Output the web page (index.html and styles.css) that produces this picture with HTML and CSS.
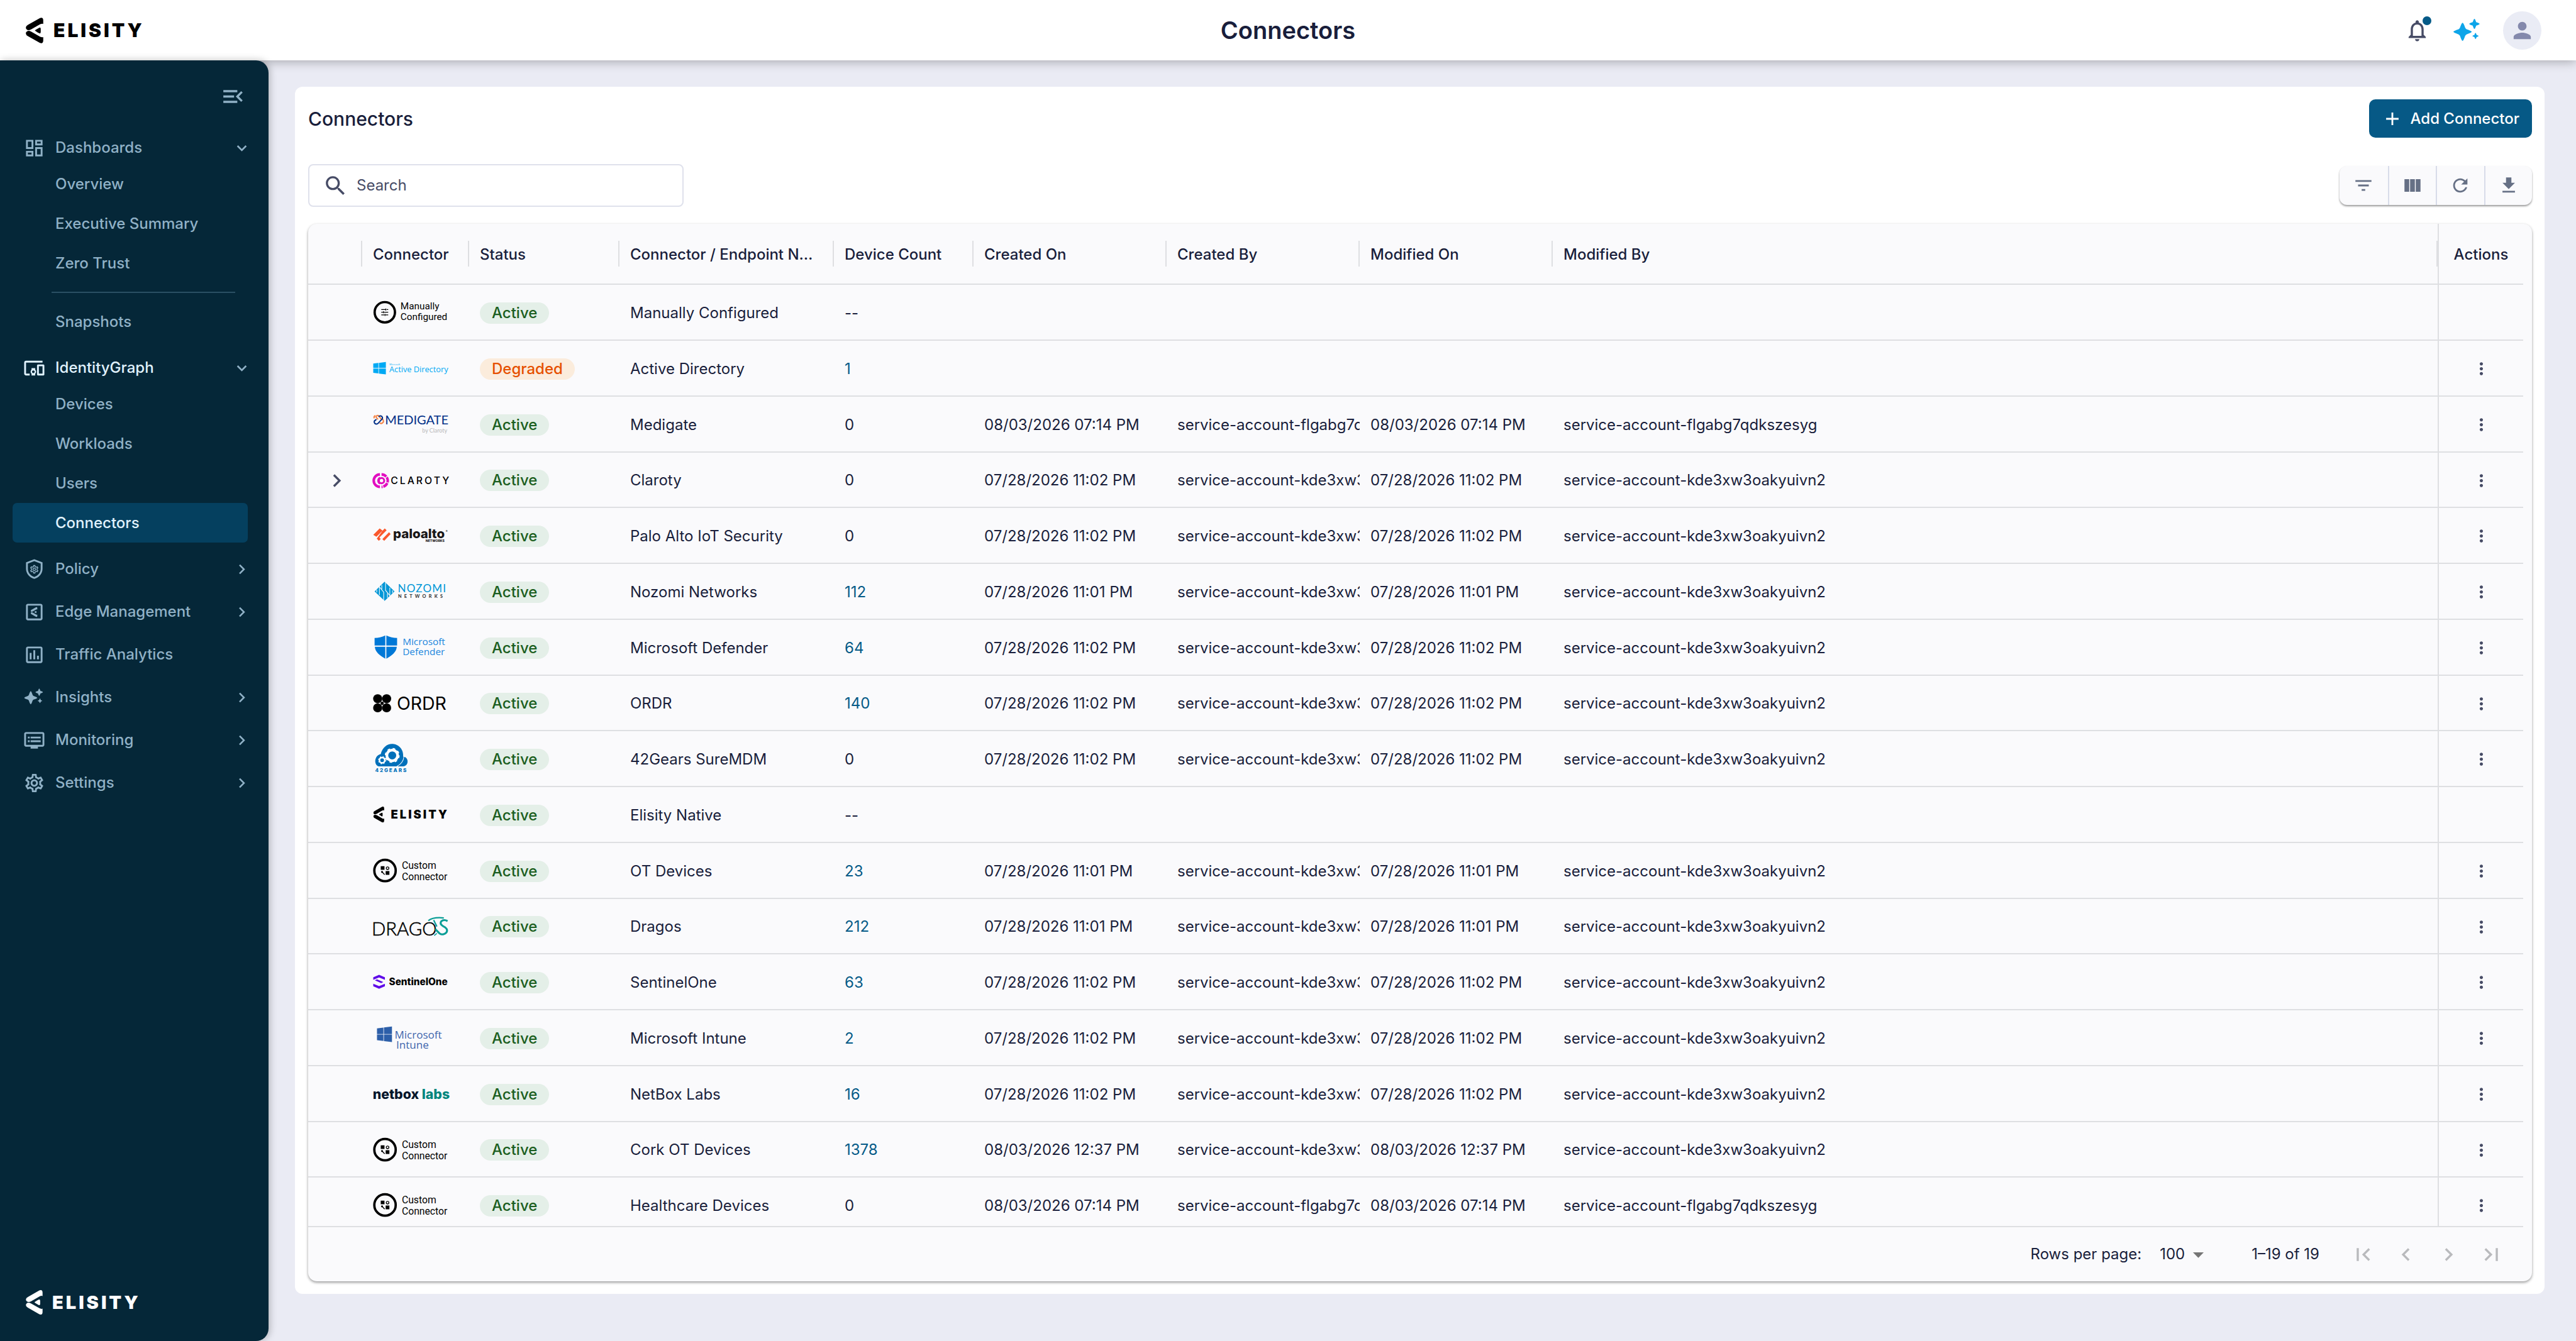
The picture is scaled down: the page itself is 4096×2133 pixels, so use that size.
FILE: index.html
```
<!DOCTYPE html>
<html lang="en">
  <head>
    <meta charset="UTF-8" />
    <meta name="viewport" content="width=device-width, initial-scale=1.0" />
    <title>Connectors</title>
    <link rel="stylesheet" href="styles.css" />
    <script src="script.js" defer></script>
  </head>
  <body>
    <!-- shared icon shapes -->
    <svg class="sprite" aria-hidden="true">
      <symbol id="mark" viewBox="0 0 33 48">
        <path d="M26.5.6Q32.7-1.4 32.7 5V11.6Q30.5 10.6 27 12.2L10 22Q3 25.4.5 20.4-1 16 4 13.4Z" />
        <path d="M26.5 47.4Q32.7 49.4 32.7 43V36.4Q30.5 37.4 27 35.8L10 26Q3 22.6.5 27.6-1 32 4 34.6Z" />
        <path d="M17 24Q17.4 23 25.6 18.6 28 18 28 21V27Q28 30 25.6 29.4 17.4 25 17 24Z" />
      </symbol>
      <symbol id="i-sparkle" viewBox="0 0 25 21">
        <path d="M8.5 3.6Q9.4 3.6 10.9 8.2 11.4 9.2 12.2 9.6 17 11.2 17 12 17 12.8 12.2 14.4 11.4 14.8 10.9 15.8 9.4 20.4 8.5 20.4 7.6 20.4 6.1 15.8 5.6 14.8 4.8 14.4 0 12.8 0 12 0 11.2 4.8 9.6 5.6 9.2 6.1 8.2 7.6 3.6 8.5 3.6Z" />
        <path d="M19.5 0Q20.1 0 21.1 3.1 24.3 4.1 24.3 4.7 24.3 5.3 21.1 6.3 20.1 9.4 19.5 9.4 18.9 9.4 17.9 6.3 14.7 5.3 14.7 4.7 14.7 4.1 17.9 3.1 18.9 0 19.5 0Z" />
        <path d="M20.5 13Q20.9 13 21.5 14.9 23.4 15.5 23.4 15.9 23.4 16.3 21.5 16.9 20.9 18.8 20.5 18.8 20.1 18.8 19.5 16.9 17.6 16.3 17.6 15.9 17.6 15.5 19.5 14.9 20.1 13 20.5 13Z" />
      </symbol>
      <symbol id="i-gear" viewBox="0 0 24 24">
        <path d="M19.43 12.98c.04-.32.07-.64.07-.98 0-.34-.03-.66-.07-.98l2.11-1.65c.19-.15.24-.42.12-.64l-2-3.46c-.09-.16-.26-.25-.44-.25-.06 0-.12.01-.17.03l-2.49 1c-.52-.4-1.08-.73-1.69-.98l-.38-2.65C14.46 2.18 14.25 2 14 2h-4c-.25 0-.46.18-.49.42l-.38 2.65c-.61.25-1.17.59-1.69.98l-2.49-1c-.06-.02-.12-.03-.18-.03-.17 0-.34.09-.43.25l-2 3.46c-.13.22-.07.49.12.64l2.11 1.65c-.04.32-.07.65-.07.98 0 .33.03.66.07.98l-2.11 1.65c-.19.15-.24.42-.12.64l2 3.46c.09.16.26.25.44.25.06 0 .12-.01.17-.03l2.49-1c.52.4 1.08.73 1.69.98l.38 2.65c.03.24.24.42.49.42h4c.25 0 .46-.18.49-.42l.38-2.65c.61-.25 1.17-.59 1.69-.98l2.49 1c.06.02.12.03.18.03.17 0 .34-.09.43-.25l2-3.46c.12-.22.07-.49-.12-.64l-2.11-1.65zm-1.98-1.71c.04.31.05.52.05.73 0 .21-.02.43-.05.73l-.14 1.13.89.7 1.08.84-.7 1.21-1.27-.51-1.04-.42-.9.68c-.43.32-.84.56-1.25.73l-1.06.43-.16 1.13-.2 1.35h-1.4l-.19-1.35-.16-1.13-1.06-.43c-.43-.18-.83-.41-1.23-.71l-.91-.7-1.06.43-1.27.51-.7-1.21 1.08-.84.89-.7-.14-1.13c-.03-.31-.05-.54-.05-.74s.02-.43.05-.73l.14-1.13-.89-.7-1.08-.84.7-1.21 1.27.51 1.04.42.9-.68c.43-.32.84-.56 1.25-.73l1.06-.43.16-1.13.2-1.35h1.39l.19 1.35.16 1.13 1.06.43c.43.18.83.41 1.23.71l.91.7 1.06-.43 1.27-.51.7 1.21-1.07.85-.89.7.14 1.13zM12 8c-2.21 0-4 1.79-4 4s1.79 4 4 4 4-1.79 4-4-1.79-4-4-4zm0 6c-1.1 0-2-.9-2-2s.9-2 2-2 2 .9 2 2-.9 2-2 2z" />
      </symbol>
      <symbol id="i-down" viewBox="0 0 24 24"><path d="M16.59 8.59 12 13.17 7.41 8.59 6 10l6 6 6-6z" /></symbol>
      <symbol id="i-right" viewBox="0 0 24 24"><path d="M8.59 16.59 13.17 12 8.59 7.41 10 6l6 6-6 6z" /></symbol>
      <symbol id="i-more" viewBox="0 0 24 24">
        <path d="M12 8c1.1 0 2-.9 2-2s-.9-2-2-2-2 .9-2 2 .9 2 2 2zm0 2c-1.1 0-2 .9-2 2s.9 2 2 2 2-.9 2-2-.9-2-2-2zm0 6c-1.1 0-2 .9-2 2s.9 2 2 2 2-.9 2-2-.9-2-2-2z" />
      </symbol>
    </svg>

    <!-- top bar -->
    <header class="topbar">
      <a class="brand" href="#">
        <svg class="brand-mark"><use href="#mark" /></svg>
        <span>ELISITY</span>
      </a>
      <h1>Connectors</h1>
      <div class="topbar-actions">
        <button class="bare-btn bell" aria-label="Notifications">
          <svg viewBox="0 0 24 24"><path d="M12 22c1.1 0 2-.9 2-2h-4c0 1.1.9 2 2 2zm6-6v-5c0-3.07-1.63-5.64-4.5-6.32V4c0-.83-.67-1.5-1.5-1.5s-1.5.67-1.5 1.5v.68C7.64 5.36 6 7.92 6 11v5l-2 2v1h16v-1l-2-2zm-2 1H8v-6c0-2.48 1.51-4.5 4-4.5s4 2.02 4 4.5v6z" /></svg>
          <i class="dot"></i>
        </button>
        <button class="bare-btn spark" aria-label="Assistant"><svg><use href="#i-sparkle" /></svg></button>
        <button class="bare-btn avatar" aria-label="Account">
          <svg viewBox="0 0 24 24"><path d="M12 12c2.21 0 4-1.79 4-4s-1.79-4-4-4-4 1.79-4 4 1.79 4 4 4zm0 2c-2.67 0-8 1.34-8 4v2h16v-2c0-2.66-5.33-4-8-4z" /></svg>
        </button>
      </div>
    </header>

    <div class="layout">
      <!-- side navigation -->
      <nav class="sidebar">
        <button class="bare-btn collapse" aria-label="Collapse menu">
          <svg viewBox="0 0 24 24"><path d="M3 18h13v-2H3v2zM3 6v2h13V6H3zm0 7h10v-2H3v2zm18 2.59L17.42 12 21 8.41 19.59 7l-5 5 5 5L21 15.59z" /></svg>
        </button>

        <div class="nav-group">
          <a class="nav-item" href="#">
            <svg class="nav-icon" viewBox="0 0 24 24"><path d="M19 5v2h-4V5h4M9 5v6H5V5h4m10 8v6h-4v-6h4M9 17v2H5v-2h4M21 3h-8v6h8V3zM11 3H3v10h8V3zm10 8h-8v10h8V11zm-10 4H3v6h8v-6z" /></svg>
            <span>Dashboards</span>
            <svg class="chev"><use href="#i-down" /></svg>
          </a>
          <a class="sub-item" href="#">Overview</a>
          <a class="sub-item" href="#">Executive Summary</a>
          <a class="sub-item" href="#">Zero Trust</a>
          <hr />
          <a class="sub-item" href="#">Snapshots</a>
        </div>

        <div class="nav-group">
          <a class="nav-item open" href="#">
            <svg class="nav-icon" viewBox="0 0 24 24"><path d="M3 6h18V4H3c-1.1 0-2 .9-2 2v12c0 1.1.9 2 2 2h4v-2H3V6zm10 6H9v1.78c-.61.55-1 1.33-1 2.22 0 .89.39 1.67 1 2.22V20h4v-1.78c.61-.55 1-1.34 1-2.22s-.39-1.67-1-2.22V12zm-2 5.5c-.83 0-1.5-.67-1.5-1.5s.67-1.5 1.5-1.5 1.5.67 1.5 1.5-.67 1.5-1.5 1.5zM22 8h-6c-.5 0-1 .5-1 1v10c0 .5.5 1 1 1h6c.5 0 1-.5 1-1V9c0-.5-.5-1-1-1zm-1 10h-4v-8h4v8z" /></svg>
            <span>IdentityGraph</span>
            <svg class="chev"><use href="#i-down" /></svg>
          </a>
          <a class="sub-item" href="#">Devices</a>
          <a class="sub-item" href="#">Workloads</a>
          <a class="sub-item" href="#">Users</a>
          <a class="sub-item selected" href="#">Connectors</a>
        </div>

        <div class="nav-group">
          <a class="nav-item" href="#">
            <svg class="nav-icon" viewBox="0 0 24 24">
              <path d="M12 1 3 4.5v7c0 5 3.700 9.500 9 11 5.300-1.500 9-6 9-11v-7zm0 2.100 7 2.700v5.700c0 4-2.900 7.500-7 8.900-4.100-1.400-7-4.900-7-8.900V5.800z" />
              <use href="#i-gear" x="6.5" y="6.5" width="11" height="11" />
            </svg>
            <span>Policy</span>
            <svg class="chev"><use href="#i-right" /></svg>
          </a>
        </div>
        <div class="nav-group">
          <a class="nav-item" href="#">
            <svg class="nav-icon" viewBox="0 0 24 24">
              <path d="M19 3H5c-1.1 0-2 .9-2 2v14c0 1.1.9 2 2 2h14c1.1 0 2-.9 2-2V5c0-1.1-.9-2-2-2zm0 16H5V5h14v14z" />
              <use href="#mark" x="8" y="6.5" width="7.5" height="11" />
            </svg>
            <span>Edge Management</span>
            <svg class="chev"><use href="#i-right" /></svg>
          </a>
        </div>
        <div class="nav-group">
          <a class="nav-item" href="#">
            <svg class="nav-icon" viewBox="0 0 24 24"><path d="M19 3H5c-1.1 0-2 .9-2 2v14c0 1.1.9 2 2 2h14c1.1 0 2-.9 2-2V5c0-1.1-.9-2-2-2zm0 16H5V5h14v14zM7 10h2v7H7zm4-3h2v10h-2zm4 6h2v4h-2z" /></svg>
            <span>Traffic Analytics</span>
          </a>
        </div>
        <div class="nav-group">
          <a class="nav-item" href="#">
            <svg class="nav-icon" viewBox="0 0 24 24"><use href="#i-sparkle" x="1" y="2" width="21" height="18" /></svg>
            <span>Insights</span>
            <svg class="chev"><use href="#i-right" /></svg>
          </a>
        </div>
        <div class="nav-group">
          <a class="nav-item" href="#">
            <svg class="nav-icon" viewBox="0 0 24 24"><path d="M21 3H3c-1.1 0-2 .9-2 2v12c0 1.1.9 2 2 2h5v2h8v-2h5c1.1 0 1.99-.9 1.99-2L23 5c0-1.1-.9-2-2-2zm0 14H3V5h18v12zm-2-9H8v2h11V8zm0 4H8v2h11v-2zM7 8H5v2h2V8zm0 4H5v2h2v-2z" /></svg>
            <span>Monitoring</span>
            <svg class="chev"><use href="#i-right" /></svg>
          </a>
        </div>
        <div class="nav-group">
          <a class="nav-item" href="#">
            <svg class="nav-icon"><use href="#i-gear" /></svg>
            <span>Settings</span>
            <svg class="chev"><use href="#i-right" /></svg>
          </a>
        </div>

        <a class="brand brand-small" href="#">
          <svg class="brand-mark"><use href="#mark" /></svg>
          <span>ELISITY</span>
        </a>
      </nav>

      <!-- main card -->
      <main class="card">
        <div class="card-head">
          <h2>Connectors</h2>
          <button class="add-btn">
            <svg viewBox="0 0 24 24"><path d="M19 13h-6v6h-2v-6H5v-2h6V5h2v6h6v2z" /></svg>
            Add Connector
          </button>
        </div>

        <div class="toolbar">
          <label class="search">
            <svg viewBox="0 0 24 24"><path d="M15.5 14h-.79l-.28-.27C15.41 12.59 16 11.11 16 9.5 16 5.91 13.09 3 9.5 3S3 5.91 3 9.5 5.91 16 9.5 16c1.61 0 3.09-.59 4.23-1.57l.27.28v.79l5 4.99L20.49 19l-4.99-5zm-6 0C7.01 14 5 11.99 5 9.5S7.01 5 9.5 5 14 7.01 14 9.5 11.99 14 9.5 14z" /></svg>
            <input type="text" placeholder="Search" aria-label="Search" />
          </label>
          <div class="tools">
            <button aria-label="Filter"><svg viewBox="0 0 24 24"><path d="M10 18h4v-2h-4v2zM3 6v2h18V6H3zm3 7h12v-2H6v2z" /></svg></button>
            <button aria-label="Columns"><svg viewBox="0 0 24 24"><path d="M14.67 5v14H9.33V5h5.34zm1 14H21V5h-5.33v14zm-7.34 0V5H3v14h5.33z" /></svg></button>
            <button aria-label="Refresh"><svg viewBox="0 0 24 24"><path d="M17.65 6.35C16.2 4.9 14.21 4 12 4c-4.42 0-7.99 3.58-7.99 8s3.57 8 7.99 8c3.73 0 6.84-2.55 7.73-6h-2.08c-.82 2.33-3.04 4-5.65 4-3.31 0-6-2.69-6-6s2.69-6 6-6c1.66 0 3.14.69 4.22 1.78L13 11h7V4l-2.35 2.35z" /></svg></button>
            <button aria-label="Download"><svg viewBox="0 0 24 24"><path d="M19 9h-4V3H9v6H5l7 7 7-7zM5 18v2h14v-2H5z" /></svg></button>
          </div>
        </div>

        <div class="grid">
          <div class="grid-scroll">
            <table>
              <colgroup>
                <col class="c-toggle" />
                <col class="c-logo" />
                <col class="c-status" />
                <col class="c-name" />
                <col class="c-count" />
                <col class="c-date" />
                <col class="c-date" />
                <col class="c-date" />
                <col />
                <col class="c-actions" />
              </colgroup>
              <thead>
                <tr>
                  <th></th>
                  <th>Connector</th>
                  <th>Status</th>
                  <th>Connector / Endpoint Name</th>
                  <th>Device Count</th>
                  <th>Created On</th>
                  <th>Created By</th>
                  <th>Modified On</th>
                  <th>Modified By</th>
                  <th class="actions">Actions</th>
                </tr>
              </thead>
              <tbody id="rows"></tbody>
            </table>
          </div>
          <footer class="pager">
            <label for="page_size">Rows per page:</label>
            <div class="page-size">
              <select id="page_size">
                <option>100</option>
                <option>50</option>
                <option>25</option>
              </select>
              <svg viewBox="0 0 24 24"><path d="M7 10l5 5 5-5z" /></svg>
            </div>
            <span class="range">1–19 of 19</span>
            <button class="bare-btn" aria-label="First page" disabled><svg viewBox="0 0 24 24"><path d="M18.41 16.59 13.82 12l4.59-4.59L17 6l-6 6 6 6zM6 6h2v12H6z" /></svg></button>
            <button class="bare-btn" aria-label="Previous page" disabled><svg viewBox="0 0 24 24"><path d="M15.41 16.59 10.83 12l4.58-4.59L14 6l-6 6 6 6z" /></svg></button>
            <button class="bare-btn" aria-label="Next page" disabled><svg viewBox="0 0 24 24"><path d="M8.59 16.59 13.17 12 8.59 7.41 10 6l6 6-6 6z" /></svg></button>
            <button class="bare-btn" aria-label="Last page" disabled><svg viewBox="0 0 24 24"><path d="M5.59 7.41 10.18 12l-4.59 4.59L7 18l6-6-6-6zM16 6h2v12h-2z" /></svg></button>
          </footer>
        </div>
      </main>
    </div>
  </body>
</html>
```
FILE: styles.css
```
* {
  box-sizing: border-box;
}

body {
  margin: 0;
  height: 100vh;
  display: flex;
  flex-direction: column;
  background-color: #eaebf4;
  color: #191e3b;
  font-family: Inter, "Liberation Sans", sans-serif;
  font-size: 24px;
  line-height: 34px;
}

a {
  color: inherit;
  text-decoration: none;
}

button,
input,
select {
  font: inherit;
  color: inherit;
}

svg {
  display: block;
  fill: currentColor;
  flex: none;
}

.sprite {
  position: absolute;
  width: 0;
  height: 0;
}

.bare-btn {
  display: flex;
  align-items: center;
  justify-content: center;
  padding: 0;
  border: none;
  background: none;
  cursor: pointer;
}

/* top bar */

.topbar {
  display: grid;
  grid-template-columns: 1fr auto 1fr;
  align-items: center;
  height: 96px;
  padding: 0 41px;
  background-color: #fff;
  box-shadow: 0 2px 16px rgba(0, 0, 0, 0.3);
  position: relative;
}

.topbar h1 {
  margin: 0;
  font-size: 38px;
  font-weight: 600;
}

.brand {
  display: flex;
  align-items: center;
  gap: 16px;
  color: #000;
  font-size: 30px;
  font-weight: 900;
  letter-spacing: 4px;
}

.brand-mark {
  width: 28px;
  height: 41px;
}

.topbar-actions {
  display: flex;
  justify-content: flex-end;
  align-items: center;
  margin-right: 14px;
  color: #474c66;
}

.bell {
  position: relative;
  margin-right: 37px;
}

.bell svg,
.avatar svg {
  width: 41px;
  height: 41px;
}

.dot {
  position: absolute;
  top: -2px;
  right: -2px;
  width: 14px;
  height: 14px;
  border-radius: 50%;
  background-color: #055a87;
}

.spark {
  margin-right: 36px;
  color: #0ea5e9;
}

.spark svg {
  width: 43px;
  height: 36px;
}

.avatar {
  width: 61px;
  height: 61px;
  border-radius: 50%;
  background-color: #eaecf5;
  color: #8489ac;
}

/* side navigation */

.layout {
  flex: 1;
  min-height: 0;
  display: flex;
}

.sidebar {
  width: 427px;
  flex: none;
  display: flex;
  flex-direction: column;
  background-color: #052738;
  border-radius: 0 20px 20px 0;
  box-shadow: 2px 0 12px rgba(0, 0, 0, 0.25);
  color: #90b1c6;
  font-weight: 500;
  position: relative;
}

.collapse {
  align-self: flex-end;
  margin: 37px 36px 27px 0;
}

.collapse svg {
  width: 41px;
  height: 41px;
}

.nav-group {
  padding: 8px 0;
}

.nav-item {
  display: flex;
  align-items: center;
  height: 52px;
  padding: 0 27px 0 37px;
}

.nav-item.open span,
.nav-item.open .nav-icon {
  color: #e0f2fe;
}

.nav-icon {
  width: 35px;
  height: 35px;
  margin-right: 16px;
}

.chev {
  width: 31px;
  height: 31px;
  margin-left: auto;
}

.sub-item {
  display: flex;
  align-items: center;
  height: 63px;
  margin: 0 33px 0 20px;
  padding-left: 68px;
  border-radius: 7px;
}

.sub-item.selected {
  background-color: #05405f;
  color: #e0f2fe;
}

.sidebar hr {
  height: 2px;
  margin: 14px 53px 14px 82px;
  border: none;
  background-color: #2a4f63;
}

.brand-small {
  margin: auto 0 42px 41px;
  gap: 15px;
  color: #fff;
  font-size: 29px;
}

.brand-small .brand-mark {
  width: 27px;
  height: 39px;
}

/* card */

.card {
  flex: 1;
  min-width: 0;
  display: flex;
  flex-direction: column;
  margin: 42px 50px 75px 42px;
  padding: 20px 20px 20px 21px;
  background-color: #fff;
  border-radius: 12px;
}

.card-head,
.toolbar {
  display: flex;
  align-items: center;
  justify-content: space-between;
}

.card-head h2 {
  margin: 0;
  font-size: 30px;
  font-weight: 500;
}

.add-btn {
  display: flex;
  align-items: center;
  justify-content: space-between;
  width: 259px;
  height: 61px;
  padding: 0 20px;
  border: none;
  border-radius: 10px;
  background-color: #065986;
  color: #fff;
  font-weight: 500;
  cursor: pointer;
}

.add-btn svg,
.tools svg {
  width: 34px;
  height: 34px;
}

.toolbar {
  margin: 42px 0 27px;
}

.search {
  display: flex;
  align-items: center;
  gap: 13px;
  width: 597px;
  height: 68px;
  padding: 0 21px;
  border: 2px solid #dfe1ec;
  border-radius: 8px;
  color: #474c66;
}

.search svg {
  width: 41px;
  height: 41px;
}

.search input {
  width: 100%;
  padding: 0;
  border: none;
  outline: none;
  background: none;
}

.search input::placeholder {
  color: #474c66;
  opacity: 1;
}

.tools {
  display: grid;
  grid-template-columns: repeat(4, 1fr);
  width: 306px;
  height: 62px;
  border-radius: 12px;
  background-color: #fafafc;
  box-shadow: 0 2px 3px rgba(0, 0, 0, 0.4);
  color: #667085;
}

.tools button {
  display: flex;
  align-items: center;
  justify-content: center;
  padding: 0;
  border: none;
  background: none;
  cursor: pointer;
}

.tools button + button {
  border-left: 2px solid #d8dce9;
}

/* data grid */

.grid {
  flex: 1;
  min-height: 0;
  display: flex;
  flex-direction: column;
  border-radius: 14px;
  background-color: #fafafc;
  box-shadow: 0 2px 4px rgba(0, 0, 0, 0.4);
}

.grid-scroll {
  flex: 1;
  min-height: 0;
  margin-right: 14px;
  overflow: hidden;
  border-bottom: 2px solid #dedfe2;
}

table {
  width: 100%;
  table-layout: fixed;
  border-collapse: separate;
  border-spacing: 0;
}

.c-toggle {
  width: 86px;
}

.c-logo {
  width: 170px;
}

.c-status {
  width: 239px;
}

.c-name {
  width: 341px;
}

.c-count {
  width: 222px;
}

.c-date {
  width: 307px;
}

.c-actions {
  width: 136px;
}

th,
td {
  padding: 2px 0 0 17px;
  border-bottom: 2px solid #dedfe2;
  overflow: hidden;
  text-align: left;
  white-space: nowrap;
}

th {
  height: 97px;
  padding-right: 24px;
  font-weight: 500;
  text-overflow: ellipsis;
  background: linear-gradient(#dedfe2, #dedfe2) right center / 2px 41px no-repeat;
}

td {
  height: 89px;
}

tbody tr:nth-child(4n) td {
  height: 88px;
}

td a {
  color: #055a87;
}

td:first-child svg {
  width: 41px;
  height: 41px;
  color: #474c66;
  margin-left: 8px;
}

th.actions,
td.actions {
  padding: 2px 0 0;
  border-left: 2px solid #dedfe2;
  background: none;
  text-align: center;
}

td.actions .bare-btn {
  margin: 0 auto;
  color: #474c66;
}

td.actions svg {
  width: 31px;
  height: 31px;
}

.chip {
  display: inline-block;
  padding: 0 19px;
  border-radius: 17px;
  background-color: #e4efe8;
  color: #1b5e20;
  font-weight: 500;
}

.chip.degraded {
  background-color: #fbecdc;
  color: #e65100;
}

/* vendor logos */

.logo {
  width: 120px;
  height: 51px;
  overflow: visible;
  fill: #000;
}

.logo text {
  font-family: Inter, sans-serif;
}

.logo .roboto {
  font-family: Roboto, sans-serif;
}

.logo .open {
  font-family: "Open Sans", sans-serif;
}

.logo .lato {
  font-family: Lato, sans-serif;
}

/* footer */

.pager {
  display: flex;
  align-items: center;
  height: 86px;
  padding-right: 31px;
  justify-content: flex-end;
}

.page-size {
  position: relative;
  margin-left: 29px;
}

.page-size select {
  width: 82px;
  padding: 0;
  border: none;
  background: none;
  appearance: none;
}

.page-size svg {
  position: absolute;
  top: -3px;
  right: 0;
  width: 41px;
  height: 41px;
  color: #757575;
  pointer-events: none;
}

.range {
  margin: 0 35px 0 64px;
}

.pager .bare-btn {
  width: 68px;
  color: #b9babd;
}

.pager .bare-btn svg {
  width: 41px;
  height: 41px;
}
```
FILE: script.js
```
const WINDOWS = `<path d="M0 20.4l9.6-1.2v9.4H0zM10.6 19l13-1.6v11.2h-13zM0 29.6h9.6v9.2L0 37.6zM10.6 29.6h13v11l-13-1.6z"/>`;

// drawn on a 140 x 60 board, one per vendor
const logos = {
  manual: `
    <circle cx="21.6" cy="29" r="19" fill="none" stroke="#000" stroke-width="4.4"/>
    <path d="M15 24h8m2 0h3M15 29h3m2 0h8M15 34h6m2 0h5M23.5 22v4M19 27v4M22 32v4" stroke="#000" stroke-width="1.4"/>
    <text class="roboto" x="51" y="23.7" font-size="18">Manually</text>
    <text class="roboto" x="51" y="43.3" font-size="18">Configured</text>`,
  ad: `<g fill="#00a9f4">${WINDOWS}
    <text class="open" x="30.4" y="23.5" font-size="4.5">Microsoft</text>
    <text class="open" x="30" y="36" font-size="15">Active Directory</text></g>`,
  medigate: `
    <g fill="none" stroke-width="2.4">
      <path d="M9 20L5.4 16.4A3 3 0 0 1 9.6 13L15 19.5A4 4 0 0 1 17 27 4 4 0 0 1 12 26.5" stroke="#f58445"/>
      <path d="M1.8 18A4 4 0 0 1 4 13" stroke="#f58445"/>
      <path d="M10 15A4.2 4.2 0 0 1 17 16 4 4 0 0 1 15.5 20.5L9 27.5A4.2 4.2 0 0 1 2 26 4 4 0 0 1 4 21.5L6 20" stroke="#002f87"/>
    </g>
    <text class="lato" x="22" y="29.6" font-size="23.5" fill="#002f87">MEDIGATE</text>
    <text class="lato" x="91.5" y="44.3" font-size="10.5" fill="#b8b8b8">by Claroty</text>`,
  claroty: `
    <g fill="none" stroke="#e20dc0">
      <path d="M12.5 18.4a11.6 11.6 0 1 0 0 23.2" stroke-width="4.8"/>
      <path d="M15.5 18.4a11.6 11.6 0 0 1 0 23.2" stroke-width="4.8" stroke-dasharray="10 1.4"/>
      <path d="M12.5 24.2a6.4 6.4 0 0 0 0 11.6" stroke-width="2.6"/>
      <circle cx="15.5" cy="30" r="5" stroke-width="3.6"/>
    </g>
    <text x="32.5" y="36.6" font-size="18.5" font-weight="500" letter-spacing="3.6">CLAROTY</text>`,
  paloalto: `
    <path fill="#fa582d" d="M0 28L12 16l5.4 4L6 31.6zM17 20.5L21.5 16l3.5 3.5L13.5 31l-2 2 2.500 2.500-3.600 3.500-3.800-4zM29.500 23l3 3.500L20.500 39 17 36z"/>
    <text x="37" y="34.5" font-size="24" font-weight="800" fill="#1a1717">paloalto</text>
    <text x="98" y="41.6" font-size="6" font-weight="800" fill="#1a1717">NETWORKS</text>
    <text x="135.5" y="23" font-size="5">®</text>`,
  nozomi: `
    <path fill="#0096d6" d="M21.2 11L39.8 29 21.2 46.7 2.5 29z"/>
    <path d="M11.5 36V20.5l8 10V47M31 22v15l-8-10V11M6.5 31V26M36 27v5M16 17v8M26.5 41v-8" fill="none" stroke="#fafafc" stroke-width="1.3"/>
    <text class="lato" x="46" y="30.4" font-size="20" letter-spacing="1.4" fill="#0096d6">NOZOMI</text>
    <text class="lato" x="46.5" y="41.2" font-size="8.5" font-weight="900" letter-spacing="5" fill="#3a3a3a">NETWORKS</text>`,
  defender: `
    <path fill="#0078d7" d="M2.5 11.5Q13 11.5 22.5 6.7V25.6H2.5zM24.5 6.9Q34 11.5 44.6 11.5V25.6H24.5zM3 28H22.5V50.2Q3.5 40 3 28zM24.5 28H44Q43.5 40 24.5 50.2z"/>
    <g fill="#1a86dd">
      <text class="open" x="55" y="24.7" font-size="18">Microsoft</text>
      <text class="open" x="55" y="43.9" font-size="18">Defender</text>
    </g>`,
  ordr: `
    <circle cx="8.3" cy="20.5" r="8.5"/><circle cx="25" cy="20.5" r="8.5"/>
    <circle cx="8.3" cy="37.5" r="8.5"/><circle cx="25" cy="37.5" r="8.5"/><circle cx="16.6" cy="29" r="3"/>
    <text x="44" y="41" font-size="33.5">ORDR</text>`,
  gears: `
    <path fill="#0070ba" d="M11 43.5C1 42.5 1 23 14 20.5 17 8 26 1.4 35 1.4S57 8 56 25.5C66 25 68 42 56 43.5z"/>
    <path d="M57.5 25Q56 38 44 43.5" fill="none" stroke="#fafafc" stroke-width="1.2"/>
    <g fill="none" stroke="#fff">
      <circle cx="35.5" cy="23" r="10" stroke-width="5"/>
      <circle cx="35.5" cy="23" r="12.4" stroke-width="3" stroke-dasharray="4.8 5"/>
      <circle cx="16.6" cy="32" r="5" stroke-width="3"/>
      <circle cx="16.6" cy="32" r="6.6" stroke-width="1.6" stroke-dasharray="2.6 2.6"/>
    </g>
    <text x="3.5" y="54" font-size="9.5" font-weight="800" letter-spacing="2.2" fill="#0070ba">42GEARS</text>`,
  elisity: `
    <use href="#mark" x="0" y="14" width="20.7" height="29.8"/>
    <text x="33" y="36.6" font-size="21.5" font-weight="900" letter-spacing="3.6">ELISITY</text>`,
  custom: `
    <circle cx="22" cy="29" r="20" fill="none" stroke="#000" stroke-width="4.4"/>
    <path d="M14 21h7v6.6h-7zM23.2 30h7v7h-7z"/>
    <circle cx="26.8" cy="24.6" r="2.4" fill="none" stroke="#000" stroke-width="1.6"/>
    <path d="M16.5 31.5l4.8 5.2" stroke="#000" stroke-width="1.6"/><circle cx="16.4" cy="31.6" r="1.8"/>
    <text class="roboto" x="53.5" y="25.5" font-size="18.5">Custom</text>
    <text class="roboto" x="53.5" y="46.5" font-size="18.5">Connector</text>`,
  dragos: `
    <text class="lato" x="-3" y="46" font-size="34.5" font-weight="300" stroke="#000" stroke-width=".7">DRAGO</text>
    <g fill="none" stroke="#0a9e96" stroke-width="3.6">
      <path d="M139 19Q132 15 127 19.5 124 24 130 28 141 33 137 40 131 46.5 124 42L116 34"/>
      <path d="M103 18Q112 11 132 13M113 17L119 29" stroke-width="2.6"/>
      <path d="M114 46L119 42" stroke-width="2"/>
    </g>`,
  sentinel: `
    <path fill="#5f0be8" d="M0 20.5L10.900 16l10.900 4.500v4.800L10.900 20.800 0 25.300zM0 32.500l10.900 4.700 10.900-4.700v4.800L10.900 42 0 37.300zM3 26.300l4-1.800 11.800 5-4 1.900z"/>
    <text x="29.5" y="35.3" font-size="18" font-weight="800">SentinelOne</text>`,
  intune: `
    <path fill="#2d5fa9" d="M7 11.5l12-1.5v12H7zM20 9.8L35 8v14H20zM7 23h12v12L7 33.5zM20 23h15v14l-15-1.800z"/>
    <g fill="#3f66ad">
      <text class="open" x="40" y="30.8" font-size="20">Microsoft</text>
      <text class="open" x="43" y="49.6" font-size="20">Intune</text>
    </g>`,
  netbox: `
    <text x="-1" y="39.4" font-size="25" font-weight="800" fill="#04162b">netbox</text>
    <text x="91" y="39.4" font-size="25" font-weight="800" fill="#00857d">labs</text>`,
};

const K = "service-account-kde3xw3oakyuivn2";
const F = "service-account-flgabg7qdkszesyg";

// logo, name, count, date, account
const connectors = [
  ["manual", "Manually Configured", "--"],
  ["ad", "Active Directory", "1", "", ""],
  ["medigate", "Medigate", "0", "08/03/2026 07:14 PM", F],
  ["claroty", "Claroty", "0", "07/28/2026 11:02 PM", K],
  ["paloalto", "Palo Alto IoT Security", "0", "07/28/2026 11:02 PM", K],
  ["nozomi", "Nozomi Networks", "112", "07/28/2026 11:01 PM", K],
  ["defender", "Microsoft Defender", "64", "07/28/2026 11:02 PM", K],
  ["ordr", "ORDR", "140", "07/28/2026 11:02 PM", K],
  ["gears", "42Gears SureMDM", "0", "07/28/2026 11:02 PM", K],
  ["elisity", "Elisity Native", "--"],
  ["custom", "OT Devices", "23", "07/28/2026 11:01 PM", K],
  ["dragos", "Dragos", "212", "07/28/2026 11:01 PM", K],
  ["sentinel", "SentinelOne", "63", "07/28/2026 11:02 PM", K],
  ["intune", "Microsoft Intune", "2", "07/28/2026 11:02 PM", K],
  ["netbox", "NetBox Labs", "16", "07/28/2026 11:02 PM", K],
  ["custom", "Cork OT Devices", "1378", "08/03/2026 12:37 PM", K],
  ["custom", "Healthcare Devices", "0", "08/03/2026 07:14 PM", F],
];

const more = `<button class="bare-btn" aria-label="Row actions"><svg><use href="#i-more"/></svg></button>`;
const expand = `<button class="bare-btn" aria-label="Expand row"><svg><use href="#i-right"/></svg></button>`;

document.getElementById("rows").innerHTML = connectors
  .map(([logo, name, count, date, account]) => {
    const builtIn = date === undefined;
    const chip = logo === "ad" ? `<span class="chip degraded">Degraded</span>` : `<span class="chip">Active</span>`;
    const devices = Number(count) > 0 ? `<a href="#">${count}</a>` : count;
    return `<tr>
      <td>${logo === "claroty" ? expand : ""}</td>
      <td><svg class="logo" viewBox="0 0 140 60">${logos[logo]}</svg></td>
      <td>${chip}</td>
      <td>${name}</td>
      <td>${devices}</td>
      <td>${date || ""}</td>
      <td>${account || ""}</td>
      <td>${date || ""}</td>
      <td>${account || ""}</td>
      <td class="actions">${builtIn ? "" : more}</td>
    </tr>`;
  })
  .join("");
```
